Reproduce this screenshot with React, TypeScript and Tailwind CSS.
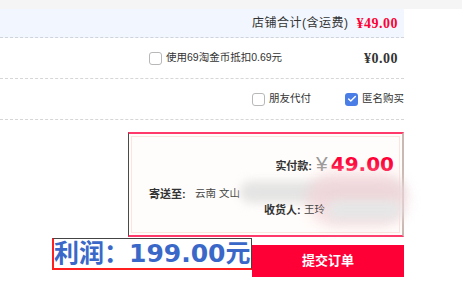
import { Check } from "lucide-react";

const cn = "font-['Liberation_Sans','Noto_Sans_CJK_SC',sans-serif]";

function Box({ checked = false }: { checked?: boolean }) {
  return checked ? (
    <span className="w-[13px] h-[13px] rounded-[3px] bg-[#4a7ee6] flex items-center justify-center">
      <Check size={10} strokeWidth={3.5} className="text-white" />
    </span>
  ) : (
    <span className="w-[13px] h-[13px] rounded-[3px] border border-[#b8b8b8] bg-white" />
  );
}

export default function App() {
  return (
    <div className={`w-[462px] h-[306px] bg-white overflow-hidden ${cn}`}>
      <div className="h-[9px] bg-[#f5f5f5]" />
      <div className="w-[404px]">
        {/* 店铺合计 */}
        <div className="h-[29px] bg-[#f2f7ff] border-b border-dashed border-[#cfd4db] flex items-center justify-end pr-[6px] gap-[8px]">
          <span className="text-[12px] text-[#333] tracking-[0.5px]">店铺合计(含运费)</span>
          <span className="text-[14px] font-bold text-[#ff0036] font-['Liberation_Serif',serif] tracking-[0.5px]">¥49.00</span>
        </div>

        <div className="h-[41px] border-b border-dashed border-[#d6d6d6] flex items-center">
          <label className="ml-[149px] flex items-center gap-[4px]">
            <Box />
            <span className="text-[10.5px] text-[#333]">使用69淘金币抵扣0.69元</span>
          </label>
          <span className="ml-auto mr-[6px] text-[14px] font-bold text-[#333] font-['Liberation_Serif',serif] tracking-[0.5px]">¥0.00</span>
        </div>

        <div className="h-[41px] border-b border-dashed border-[#d6d6d6] flex items-center justify-end">
          <label className="flex items-center gap-[4px]">
            <Box />
            <span className="text-[10.5px] text-[#333]">朋友代付</span>
          </label>
          <label className="ml-[34px] flex items-center gap-[4px]">
            <Box checked />
            <span className="text-[10.5px] text-[#333] whitespace-nowrap">匿名购买</span>
          </label>
        </div>

        {/* 实付款 */}
        <div className="mt-[12px] ml-[128px] h-[105px] border-t-2 border-b-2 border-[#ff3a6a] border-l border-l-[#4a4a4a] border-r-2 border-r-[#c9b9b2] bg-[#fffdfb] p-[2px]">
          <div className="h-full border border-[#fbe5df] flex flex-col items-end pr-[5px]">
            <div className="mt-[15px] flex items-end">
              <span className="text-[11px] font-bold text-[#333] mb-[2px]">实付款:</span>
              <span className="ml-[4px] text-[21px] leading-[24px] text-[#999]">¥</span>
              <span className="ml-[3px] text-[20px] leading-[24px] font-bold text-[#ff0036] font-['DejaVu_Sans',sans-serif]">49.00</span>
            </div>
            <div className="relative self-stretch mt-[10px] h-[16px]">
              <span className="absolute left-[17px] top-0 text-[11px] text-[#333] font-bold">寄送至:</span>
              <span className="absolute left-[63px] top-0 text-[10.5px] text-[#444]">云南 文山</span>
              <span className="absolute left-[108px] top-[-5px] w-[165px] h-[22px] bg-[#dedede] blur-[5px] rounded-full opacity-80" />
              <span className="absolute left-[175px] top-[-14px] w-[100px] h-[54px] bg-[#f3d2d7] blur-[7px] rounded-full opacity-70" />
            </div>
            <div className="relative self-stretch h-[16px]">
              <span className="absolute left-[132px] top-0 text-[11px] text-[#333] font-bold">收货人:</span>
              <span className="absolute left-[172px] top-0 text-[10.5px] text-[#444]">王玲</span>
              <span className="absolute left-[195px] top-[-2px] w-[75px] h-[20px] bg-[#e6e6e6] blur-[5px] rounded-full" />
            </div>
          </div>
        </div>

        <div className="mt-[1px] ml-[52px] flex items-start">
          <div className="w-[200px] h-[32px] border-l-2 border-b-2 border-[#ff1f1f] border-t border-r border-t-[#444] border-r-[#444] flex items-center overflow-hidden">
            <span className="text-[25px] leading-[29px] font-bold text-[#3a68c8] whitespace-nowrap font-['DejaVu_Sans','Noto_Sans_CJK_SC',sans-serif]">利润：199.00元</span>
          </div>
          <button className="mt-[7px] w-[152px] h-[32px] bg-[#ff0036] text-white text-[13px] font-bold">提交订单</button>
        </div>
      </div>
    </div>
  );
}
